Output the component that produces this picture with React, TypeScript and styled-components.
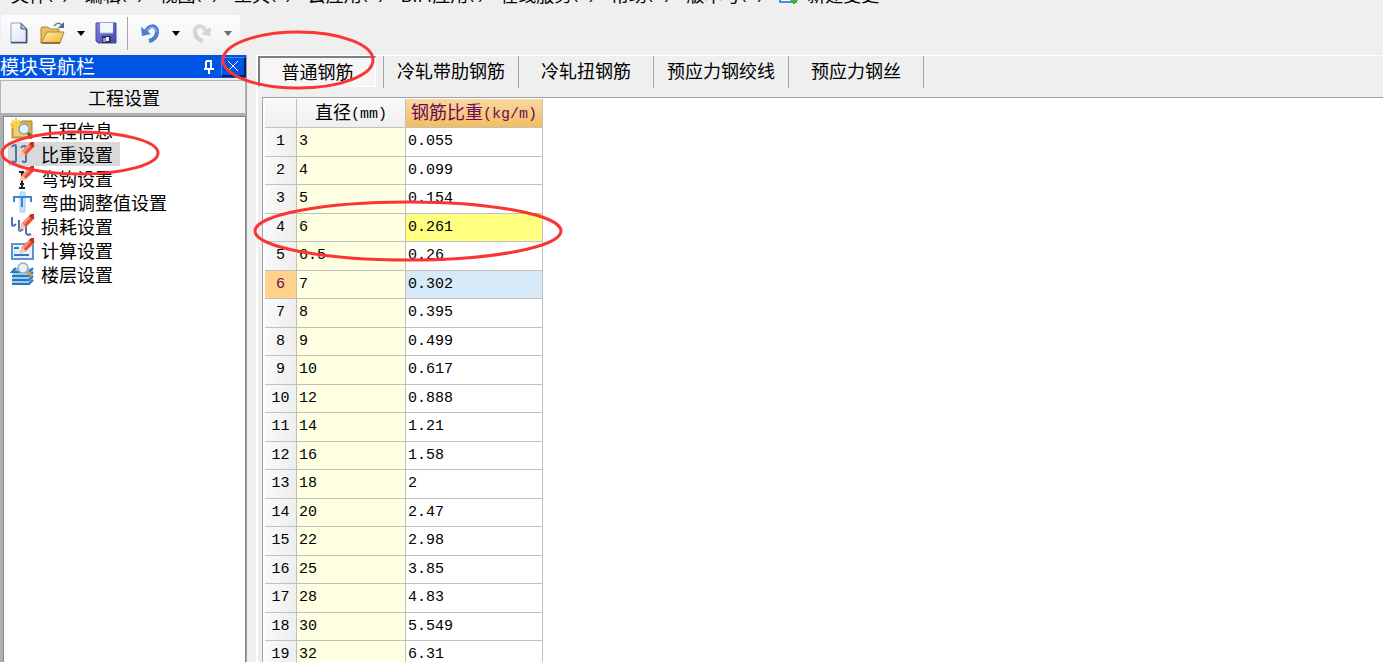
import React from "react";
import styled, { createGlobalStyle, css } from "styled-components";

const Global = createGlobalStyle`
  * { box-sizing: border-box; }
  html, body { margin: 0; height: 100%; overflow: hidden; }
  #root { height: 100%; }
  body {
    background: #efefef;
    color: #000;
    font: 18px/24px "Noto Sans CJK SC", sans-serif;
  }
  button, input { font: inherit; color: inherit; }
`;

const Window = styled.div`
  height: 100vh;
  display: flex;
  flex-direction: column;
  overflow: hidden;
  position: relative;
`;

const MenuBar = styled.nav`
  display: flex;
  height: 15px;
  flex: none;
  align-items: flex-end;
  padding: 0 0 9px 11px;
  gap: 16px;
`;

const MenuItem = styled.button`
  border: 0;
  background: none;
  padding: 0;
  height: 24px;
  line-height: 24px;
  white-space: nowrap;
  display: flex;
  align-items: center;
  gap: 8px;
`;

const Latin = styled.span`
  font: 15px/24px "Liberation Mono", monospace;
  vertical-align: 1px;
`;

const MenuKey = styled.span`
  font: 17px/24px "Liberation Sans", sans-serif;
  margin-left: -8px;
`;

const ToolBar = styled.div`
  display: flex;
  align-items: center;
  align-self: flex-start;
  flex: none;
  height: 40px;
  width: 239px;
  margin-left: 1px;
  padding: 0 0 4px 8px;
  border-radius: 4px;
  background: linear-gradient(#fdfdfd, #f0f0f0);
`;

const ToolButton = styled.button<{ $w: number }>`
  border: 0;
  background: none;
  padding: 0;
  height: 32px;
  width: ${(p) => p.$w}px;
  display: flex;
  align-items: center;
  justify-content: center;
  flex: none;
`;

const ToolSeparator = styled.span`
  flex: none;
  width: 1px;
  height: 33px;
  background: #a5a5a5;
`;

const Body = styled.div`
  flex: 1;
  min-height: 0;
  display: flex;
`;

const SidePanel = styled.aside`
  flex: none;
  width: 247px;
  display: flex;
  flex-direction: column;
  background: #b0b0b0;
  border-right: 1px solid #a0a0a0;
`;

const PanelTitle = styled.header`
  height: 25px;
  flex: none;
  display: flex;
  align-items: center;
  background: #0054e3;
  color: #fff;
  border-bottom: 2px solid #efefef;
`;

const PanelName = styled.h2`
  margin: 0;
  flex: 1;
  height: 24px;
  font-size: 19px;
  font-weight: 400;
  line-height: 22px;
`;

const PanelButton = styled.button<{ $raised?: boolean }>`
  width: 25px;
  height: 20px;
  padding: 0;
  display: flex;
  align-items: center;
  justify-content: center;
  background: none;
  border: 0;
  ${(p) =>
    p.$raised &&
    css`
      border: 1px solid #4f86ea;
      border-right: 2px solid #001f66;
      border-bottom: 2px solid #001f66;
    `}
`;

const SectionButton = styled.button`
  height: 34px;
  flex: none;
  padding: 0 0 0 2px;
  background: #efefef;
  border: 1px solid #fff;
  border-left-color: #a0a0a0;
  border-bottom-color: #a0a0a0;
  outline: 1px solid #b4b4b4;
  outline-offset: -1px;
`;

const NavList = styled.ul`
  flex: 1;
  margin: 2px 0 0 3px;
  padding: 1px 0 0 4px;
  list-style: none;
  background: #fff;
  border: 1px solid #828790;
  border-bottom: 0;
`;

const NavItem = styled.li`
  height: 24px;
  display: flex;
`;

const NavLink = styled.a<{ $active?: boolean }>`
  display: flex;
  align-items: center;
  gap: 7px;
  height: 24px;
  padding: 0 7px 0 2px;
  line-height: 22px;
  color: #000;
  text-decoration: none;
  background: ${(p) => (p.$active ? "#d9d9d9" : "transparent")};
`;

const Main = styled.main`
  flex: 1;
  min-width: 0;
  display: flex;
  flex-direction: column;
  margin-left: 9px;
  border-left: 2px solid #fff;
  border-top: 1px solid #fff;
`;

const TabBar = styled.div`
  height: 41px;
  flex: none;
  display: flex;
  align-items: flex-start;
`;

const Tab = styled.button<{ $active?: boolean }>`
  width: 135px;
  height: 32px;
  padding: 0 0 4px;
  background: none;
  border: 0;
  border-right: 1px solid #a5a5a5;
  ${(p) =>
    p.$active &&
    css`
      width: 118px;
      height: 31px;
      padding: 0 0 2px;
      background: #f6f6f6;
      border: 1px solid #fff;
      border-top: 2px solid #808080;
      border-left: 2px solid #808080;
    `}
`;

const TabGap = styled.span`
  width: 8px;
  height: 32px;
  border-right: 1px solid #a5a5a5;
`;

const Sheet = styled.section`
  flex: 1;
  min-height: 0;
  overflow: hidden;
  margin-left: 4px;
  padding: 1px 1px 0 2px;
  background: #fff;
  border-top: 1px solid #a0a0a8;
  border-left: 1px solid #a0a0a8;
`;

const Grid = styled.table`
  border-collapse: separate;
  border-spacing: 0;
  table-layout: fixed;
  width: 278px;
`;

const HeadCell = styled.th<{ $active?: boolean }>`
  height: 28px;
  padding: 0;
  font-weight: 400;
  line-height: 24px;
  white-space: nowrap;
  border-right: 1px solid #c0c0c0;
  border-bottom: 1px solid #c0c0c0;
  background: ${(p) => (p.$active ? "linear-gradient(#fad8a0, #f3bd61)" : "linear-gradient(#fafafa, #efefef)")};
  color: ${(p) => (p.$active ? "#6a0a5e" : "#000")};
`;

const Row = styled.tr`
  height: 29px;
  &:nth-child(even) {
    height: 28px;
  }
`;

const RowHead = styled.th<{ $active?: boolean }>`
  padding: 0;
  font: 15px/24px "Liberation Mono", monospace;
  border-right: 1px solid #c0c0c0;
  border-bottom: 1px solid #c0c0c0;
  background: ${(p) => (p.$active ? "#ffd18a" : "linear-gradient(100deg, #fbfbfb, #ededed)")};
  color: ${(p) => (p.$active ? "#6a0a5e" : "#000")};
`;

const Cell = styled.td<{ $bg?: string }>`
  padding: 0 2px;
  font: 15px/24px "Liberation Mono", monospace;
  border-right: 1px solid #c0c0c0;
  border-bottom: 1px solid #c0c0c0;
  background: ${(p) => p.$bg || "#fff"};
`;

const Markup = styled.svg`
  position: absolute;
  left: 0;
  top: 0;
  width: 600px;
  height: 300px;
  pointer-events: none;
`;

const Caret = ({ color = "#000" }: { color?: string }) => (
  <svg width="8" height="5" viewBox="0 0 8 5" aria-hidden="true">
    <path d="M0 0H8L4 5Z" fill={color} />
  </svg>
);

const NewIcon = () => (
  <svg width="20" height="22" viewBox="0 0 20 22" aria-hidden="true">
    <defs>
      <linearGradient id="page" x1="0" y1="0" x2="1" y2="1">
        <stop offset="0" stopColor="#fff" />
        <stop offset="1" stopColor="#d5e3f5" />
      </linearGradient>
    </defs>
    <path d="M2 1H12L18 7V21H2Z" fill="url(#page)" stroke="#8fa0ba" />
    <path d="M17.5 7V20.5H2" fill="none" stroke="#44566e" strokeWidth="1.6" />
    <path d="M12 1V7H18Z" fill="#a8bdd6" stroke="#4a607f" />
  </svg>
);

const OpenIcon = () => (
  <svg width="26" height="24" viewBox="0 0 26 24" aria-hidden="true">
    <defs>
      <linearGradient id="folder" x1="0" y1="0" x2="1" y2="1">
        <stop offset="0" stopColor="#fff0b0" />
        <stop offset="1" stopColor="#eeb030" />
      </linearGradient>
    </defs>
    <path d="M1 22V7L2 6H8L10 8H19V11" fill="#e9c262" stroke="#a88432" />
    <path d="M1 22L7 11H24L20 22Z" fill="url(#folder)" stroke="#b08425" />
    <path d="M2 22H20" stroke="#7b5f1c" strokeWidth="1.5" />
    <path d="M14 5Q18 0 22 4" fill="none" stroke="#6d8299" strokeWidth="1.6" />
    <path d="M24 1V7H18Z" fill="#4f6a88" />
  </svg>
);

const SaveIcon = () => (
  <svg width="22" height="22" viewBox="0 0 22 22" aria-hidden="true">
    <defs>
      <linearGradient id="disk" x1="0" y1="0" x2="1" y2="1">
        <stop offset="0" stopColor="#8286e0" />
        <stop offset="1" stopColor="#4347ab" />
      </linearGradient>
    </defs>
    <path d="M1 1H21V21H3L1 19Z" fill="url(#disk)" stroke="#474b9e" />
    <path d="M5 1H18V11H5Z" fill="#f2f6fd" />
    <path d="M5 11H18" stroke="#a9b6e8" />
    <path d="M7 14H16V21H7Z" fill="#2d3059" />
    <path d="M8 16H11V20H8Z" fill="#8f96c2" />
    <path d="M11 15H14V19H11Z" fill="#e4e8f5" />
  </svg>
);

const Arrow = ({ color, light, flip }: { color: string; light: string; flip?: boolean }) => (
  <svg width="20" height="20" viewBox="0 0 20 20" aria-hidden="true">
    <g transform={flip ? "matrix(-1 0 0 1 20 0)" : undefined}>
      <path d="M6 9C8 2 17 1 17 9C17 13 14 17 9 18" fill="none" stroke={color} strokeWidth="4" />
      <path d="M7 8C9 3 16 3 16.500 9" fill="none" stroke={light} strokeWidth="1.2" />
      <path d="M1 4L2 13L11 11Z" fill={color} />
    </g>
  </svg>
);

const Pencil = () => (
  <g>
    <path d="M10 15L12 9L20 1L25 4L16 13Z" fill="#ee4b35" />
    <path d="M12 9L20 1L22 2L14 11Z" fill="#ff8f70" />
    <path d="M9 16L12 9L16 13Z" fill="#f5c7a8" />
    <path d="M19 2L21 0H24V4L22 5Z" fill="#c03322" />
  </g>
);

const iconArt: Record<string, React.ReactNode> = {
  info: (
    <g>
      <path d="M2 5H10L12 3H22V20H2Z" fill="#dfae45" stroke="#b37f1f" />
      <path d="M4 8H20V18H4Z" fill="#f0cd72" />
      <path d="M6 0V11M0 6H12M2 2L10 10M10 2L2 10" stroke="#f8d443" strokeWidth="2" />
      <circle cx="14" cy="11" r="5" fill="#e8f2fb" stroke="#8aa3bf" strokeWidth="1.6" />
      <path d="M18 15L22 20" stroke="#6b5a3a" strokeWidth="3" />
    </g>
  ),
  weight: (
    <g>
      <path
        d="M2 5Q3 3 5 3Q6 3 6 5V18Q6 20 5 20Q3 20 2 19M11 6Q12 4 14 4H15Q16 5 16 7V18Q16 20 15 20Q13 20 12 19"
        fill="none"
        stroke="#4a72b4"
        strokeWidth="2"
      />
      <Pencil />
    </g>
  ),
  hook: (
    <g>
      <path d="M9 6H14M12 6V22M9 22H15M10 18H14" fill="none" stroke="#222" strokeWidth="2" />
      <Pencil />
    </g>
  ),
  bend: (
    <g>
      <path d="M10 2H15V22H10Z" fill="#c3e4f8" stroke="#9dcdee" />
      <path d="M4 12V7H21V12M12 7V17" fill="none" stroke="#3b86cf" strokeWidth="2" />
    </g>
  ),
  loss: (
    <g>
      <path
        d="M2 3V11Q3 13 6 10M9 6V16Q10 18 13 15M16 12V19Q17 22 21 20"
        fill="none"
        stroke="#4a72b4"
        strokeWidth="2"
      />
      <Pencil />
    </g>
  ),
  calc: (
    <g>
      <path d="M2 6H23V21H2Z" fill="#e3f0fd" stroke="#5c94d3" strokeWidth="2" />
      <path d="M4 10H9M4 17H19" stroke="#3c76bd" strokeWidth="2" />
      <Pencil />
    </g>
  ),
  floor: (
    <g>
      <path d="M3 6H23V19L19 23H2Z" fill="#9accf2" />
      <path d="M6 6L2 10H19L23 6M2 14H19L23 10M2 18H19L23 14M2 22H19L23 18" fill="none" stroke="#2577bd" strokeWidth="2" />
      <circle cx="13" cy="6" r="5" fill="#e6f0f8" stroke="#9babbd" strokeWidth="1.6" />
      <path d="M17 9L22 14" stroke="#cc9b4d" strokeWidth="3" />
    </g>
  ),
};

const NavIcon = ({ kind }: { kind: string }) => (
  <svg width="24" height="24" viewBox="0 0 24 24" overflow="visible" aria-hidden="true">
    {iconArt[kind]}
  </svg>
);

const menus = [
  ["文件", "(F)"], ["编辑", "(E)"], ["视图", "(V)"], ["工具", "(T)"], ["云应用", "(Y)"],
  ["BIM应用", "(I)"], ["在线服务", "(S)"], ["帮助", "(H)"], ["版本号", "(B)"],
];

const navItems = [
  ["info", "工程信息"], ["weight", "比重设置"], ["hook", "弯钩设置"], ["bend", "弯曲调整值设置"],
  ["loss", "损耗设置"], ["calc", "计算设置"], ["floor", "楼层设置"],
];

const tabs = ["冷轧带肋钢筋", "冷轧扭钢筋", "预应力钢绞线", "预应力钢丝"];

const rows: [string, string][] = [
  ["3", "0.055"], ["4", "0.099"], ["5", "0.154"], ["6", "0.261"], ["6.5", "0.26"], ["7", "0.302"],
  ["8", "0.395"], ["9", "0.499"], ["10", "0.617"], ["12", "0.888"], ["14", "1.21"], ["16", "1.58"],
  ["18", "2"], ["20", "2.47"], ["22", "2.98"], ["25", "3.85"], ["28", "4.83"], ["30", "5.549"], ["32", "6.31"],
];

const weightColor: Record<number, string> = { 3: "#ffff80", 5: "#d8e9f7" };

export default function App() {
  return (
    <Window>
      <Global />
      <MenuBar>
        {menus.map(([name, key]) => (
          <MenuItem key={name}>
            {name}
            <MenuKey>{key}</MenuKey>
          </MenuItem>
        ))}
        <MenuItem>
          <svg width="20" height="20" viewBox="0 0 20 20" aria-hidden="true">
            <path d="M1 1H17V18H1Z" fill="#fff" stroke="#4a90d9" strokeWidth="2" />
            <path d="M10 14H20L15 20Z" fill="#4cb81c" stroke="#36a010" />
          </svg>
          新建变更
        </MenuItem>
      </MenuBar>
      <ToolBar>
        <ToolButton $w={20} aria-label="新建"><NewIcon /></ToolButton>
        <ToolButton $w={48} aria-label="打开"><OpenIcon /></ToolButton>
        <ToolButton $w={8} aria-label="打开选项"><Caret /></ToolButton>
        <ToolButton $w={42} aria-label="保存"><SaveIcon /></ToolButton>
        <ToolSeparator />
        <ToolButton $w={44} aria-label="撤销"><Arrow color="#4a7fd0" light="#8db5ee" /></ToolButton>
        <ToolButton $w={8} aria-label="撤销选项"><Caret /></ToolButton>
        <ToolButton $w={44} aria-label="恢复"><Arrow color="#d2d2d2" light="#e4e4e4" flip /></ToolButton>
        <ToolButton $w={8} aria-label="恢复选项"><Caret color="#6d6d6d" /></ToolButton>
      </ToolBar>
      <Body>
        <SidePanel>
          <PanelTitle>
            <PanelName>模块导航栏</PanelName>
            <PanelButton aria-label="固定">
              <svg width="12" height="14" viewBox="0 0 12 14" aria-hidden="true">
                <path d="M3 1H9M3 1V8M1 9H11M6 9V14M8 1V8" fill="none" stroke="#fff" strokeWidth="2" />
              </svg>
            </PanelButton>
            <PanelButton $raised aria-label="关闭">
              <svg width="12" height="12" viewBox="0 0 12 12" aria-hidden="true">
                <path d="M1 1L11 11M11 1L1 11" stroke="#fff" />
              </svg>
            </PanelButton>
          </PanelTitle>
          <SectionButton>工程设置</SectionButton>
          <NavList>
            {navItems.map(([kind, name]) => (
              <NavItem key={kind}>
                <NavLink href="#" $active={kind === "weight"}>
                  <NavIcon kind={kind} />
                  {name}
                </NavLink>
              </NavItem>
            ))}
          </NavList>
        </SidePanel>
        <Main>
          <TabBar>
            <Tab $active>普通钢筋</Tab>
            <TabGap />
            {tabs.map((name) => (
              <Tab key={name}>{name}</Tab>
            ))}
          </TabBar>
          <Sheet>
            <Grid>
              <colgroup>
                <col width="32" />
                <col width="109" />
                <col width="137" />
              </colgroup>
              <thead>
                <tr>
                  <HeadCell />
                  <HeadCell>直径<Latin>(mm)</Latin></HeadCell>
                  <HeadCell $active>钢筋比重<Latin>(kg/m)</Latin></HeadCell>
                </tr>
              </thead>
              <tbody>
                {rows.map(([diameter, weight], i) => (
                  <Row key={diameter}>
                    <RowHead scope="row" $active={i === 5}>{i + 1}</RowHead>
                    <Cell $bg="#ffffe1">{diameter}</Cell>
                    <Cell $bg={weightColor[i]}>{weight}</Cell>
                  </Row>
                ))}
              </tbody>
            </Grid>
          </Sheet>
        </Main>
      </Body>
      <Markup viewBox="0 0 600 300" aria-hidden="true">
        <g fill="none" stroke="#fb3434" strokeWidth="3">
          <ellipse cx="298" cy="60" rx="75" ry="28" />
          <ellipse cx="80" cy="153" rx="78" ry="21" />
          <ellipse cx="408" cy="231" rx="153" ry="29" />
        </g>
      </Markup>
    </Window>
  );
}
